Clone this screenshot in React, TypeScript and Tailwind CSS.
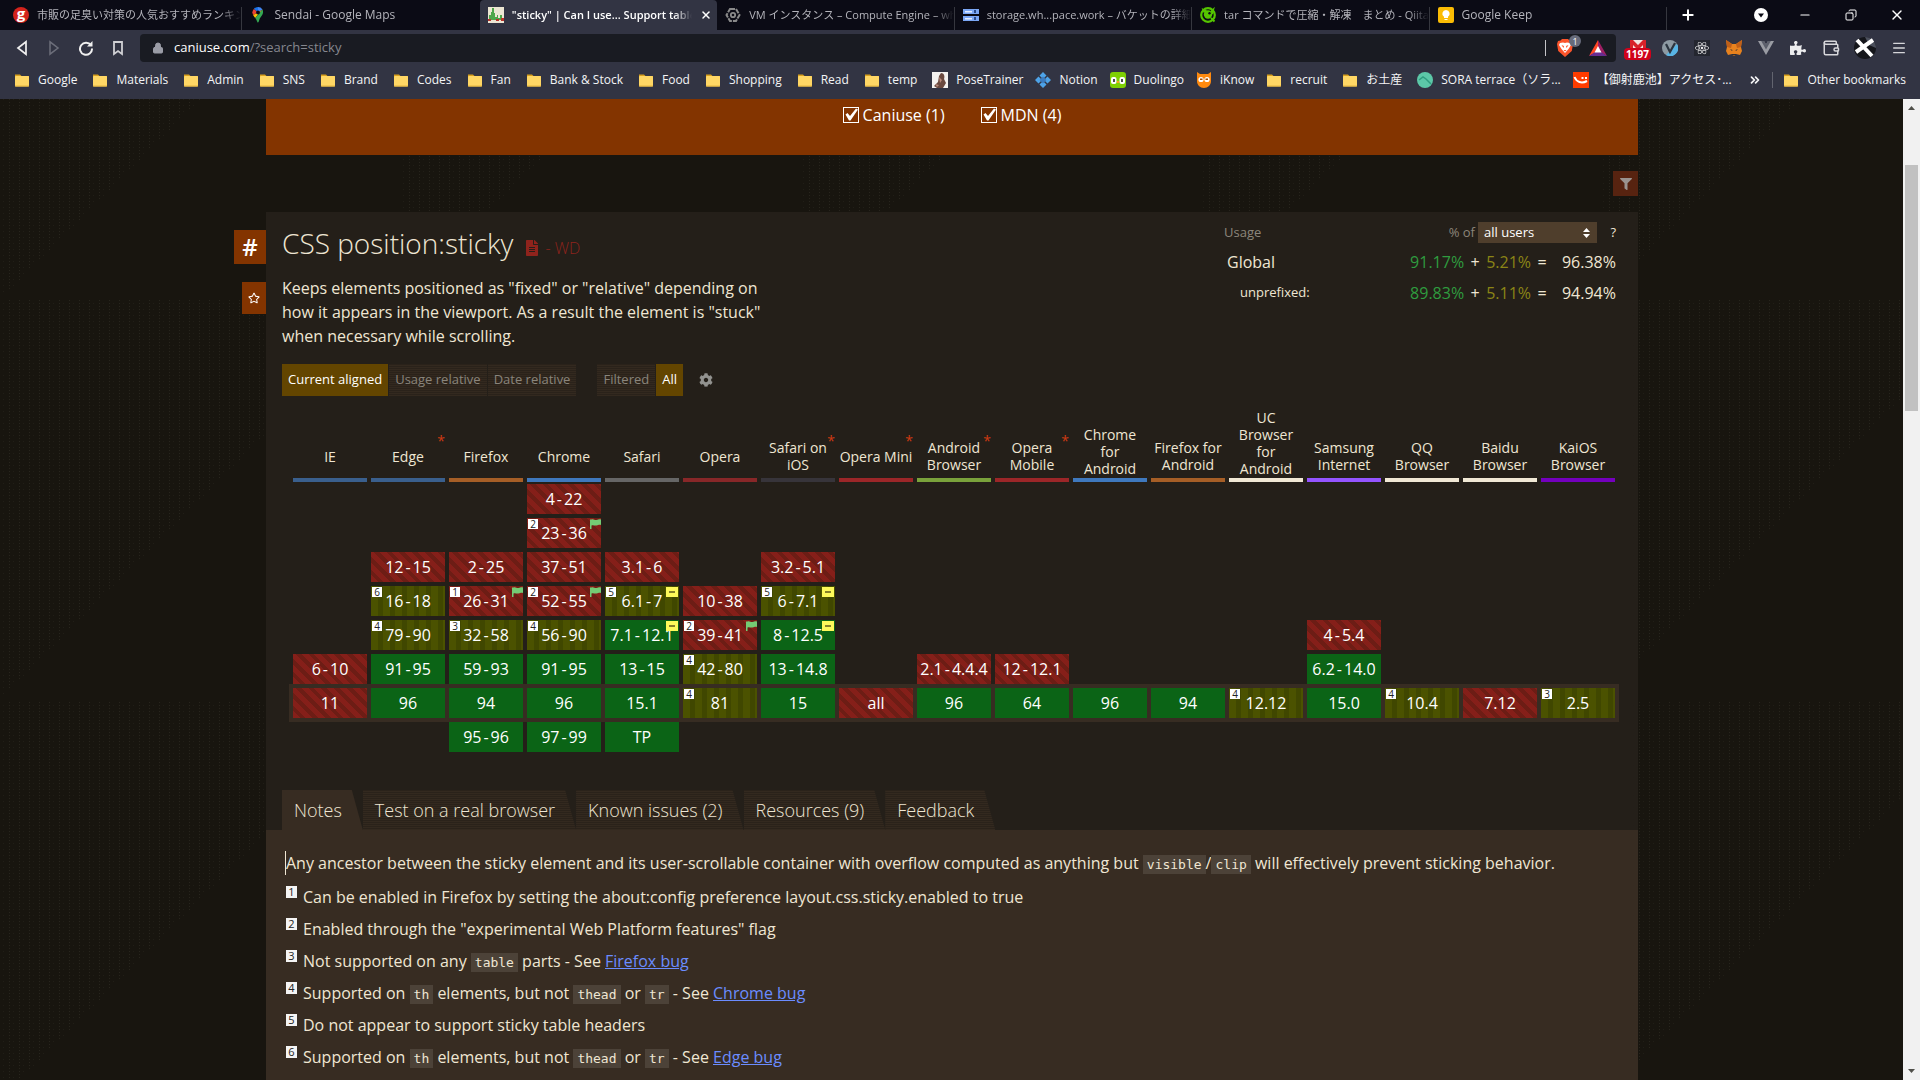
import type { ReactNode } from "react";
import clsx from "clsx";
import { Lock, Menu, Minus, Plus, X, Copy, ChevronsRight, Wallet } from "lucide-react";
import { FaCog, FaFileAlt, FaFilter, FaPuzzlePiece, FaReact, FaRegStar } from "react-icons/fa";

type Support = "y" | "n" | "a";
type Mark = "flag" | "prefix";

interface Version {
  from: string;
  to?: string;
  support: Support;
  note?: string;
  mark?: Mark;
}

interface Browser {
  name: string;
  bar: string;
  star?: boolean;
  // one entry per table row, oldest first; row 6 is the current version
  versions: Record<number, Version>;
}

const y = (from: string, to?: string, note?: string, mark?: Mark): Version => ({ from, to, note, mark, support: "y" });
const n = (from: string, to?: string, note?: string, mark?: Mark): Version => ({ from, to, note, mark, support: "n" });
const a = (from: string, to?: string, note?: string, mark?: Mark): Version => ({ from, to, note, mark, support: "a" });

const CURRENT_ROW = 6;
const ROWS = [0, 1, 2, 3, 4, 5, 6, 7];

const BROWSERS: Browser[] = [
  { name: "IE", bar: "border-[#3a5f8d]", versions: { 5: n("6", "10"), 6: n("11") } },
  {
    name: "Edge",
    bar: "border-[#3a5f8d]",
    star: true,
    versions: { 2: n("12", "15"), 3: a("16", "18", "6"), 4: a("79", "90", "4"), 5: y("91", "95"), 6: y("96") },
  },
  {
    name: "Firefox",
    bar: "border-[#a65e26]",
    versions: {
      2: n("2", "25"),
      3: n("26", "31", "1", "flag"),
      4: a("32", "58", "3"),
      5: y("59", "93"),
      6: y("94"),
      7: y("95", "96"),
    },
  },
  {
    name: "Chrome",
    bar: "border-[#3f78bd]",
    versions: {
      0: n("4", "22"),
      1: n("23", "36", "2", "flag"),
      2: n("37", "51"),
      3: n("52", "55", "2", "flag"),
      4: a("56", "90", "4"),
      5: y("91", "95"),
      6: y("96"),
      7: y("97", "99"),
    },
  },
  {
    name: "Safari",
    bar: "border-[#666666]",
    versions: {
      2: n("3.1", "6"),
      3: a("6.1", "7", "5", "prefix"),
      4: y("7.1", "12.1", undefined, "prefix"),
      5: y("13", "15"),
      6: y("15.1"),
      7: y("TP"),
    },
  },
  {
    name: "Opera",
    bar: "border-[#882728]",
    versions: { 3: n("10", "38"), 4: n("39", "41", "2", "flag"), 5: a("42", "80", "4"), 6: a("81", undefined, "4") },
  },
  {
    name: "Safari on\niOS",
    bar: "border-[#37343a]",
    star: true,
    versions: {
      2: n("3.2", "5.1"),
      3: a("6", "7.1", "5", "prefix"),
      4: y("8", "12.5", undefined, "prefix"),
      5: y("13", "14.8"),
      6: y("15"),
    },
  },
  { name: "Opera Mini", bar: "border-[#9c2628]", star: true, versions: { 6: n("all") } },
  { name: "Android\nBrowser", bar: "border-[#7aa23b]", star: true, versions: { 5: n("2.1", "4.4.4"), 6: y("96") } },
  { name: "Opera\nMobile", bar: "border-[#9c2628]", star: true, versions: { 5: n("12", "12.1"), 6: y("64") } },
  { name: "Chrome\nfor\nAndroid", bar: "border-[#3f78bd]", versions: { 6: y("96") } },
  { name: "Firefox for\nAndroid", bar: "border-[#a65e26]", versions: { 6: y("94") } },
  { name: "UC\nBrowser\nfor\nAndroid", bar: "border-[#f1e8d5]", versions: { 6: a("12.12", undefined, "4") } },
  {
    name: "Samsung\nInternet",
    bar: "border-[#9454ff]",
    versions: { 4: n("4", "5.4"), 5: y("6.2", "14.0"), 6: y("15.0") },
  },
  { name: "QQ\nBrowser", bar: "border-[#f1e8d5]", versions: { 6: a("10.4", undefined, "4") } },
  { name: "Baidu\nBrowser", bar: "border-[#f1e8d5]", versions: { 6: n("7.12") } },
  { name: "KaiOS\nBrowser", bar: "border-[#7400bd]", versions: { 6: a("2.5", undefined, "3") } },
];

const SUPPORT_BG: Record<Support, string> = {
  y: "bg-[#0b6416]",
  n: "bg-[#851f19] bg-[repeating-linear-gradient(45deg,#851f19_0_5px,#6d1d15_5px_9px)]",
  a: "bg-[#4b5200] bg-[repeating-linear-gradient(90deg,#4b5200_0_7px,#404700_7px_12px)]",
};

function FolderIcon() {
  return (
    <svg viewBox="0 0 16 16" className="size-4 shrink-0">
      <path d="M1 2.5h5l1.5 1.5H15v3H1z" fill="#d9a01d" />
      <rect x="1" y="4" width="14" height="10.5" rx="0.8" fill="#ffd765" />
      <path d="M1 13.5h14v.5a.6.6 0 0 1-.6.6H1.600a.6.6 0 0 1-.6-.6z" fill="#e9b73e" />
    </svg>
  );
}

function MapPin() {
  return (
    <svg viewBox="0 0 16 16" className="size-4 shrink-0">
      <path d="M8 0a5.500 5.500 0 0 0-4.200 1.900L8 5.500z" fill="#1a73e8" />
      <path d="M3.800 1.900A5.500 5.500 0 0 0 3.100 8L8 5.500z" fill="#ea4335" />
      <path d="M8 0a5.500 5.500 0 0 1 4.500 2.400L8 5.500z" fill="#4285f4" />
      <path d="M3.100 8c.5 1 1.300 1.900 2.100 3L12.500 2.400 8 5.500z" fill="#fbbc04" />
      <path d="M12.500 2.400C14.500 6.500 11 9 9.800 11.500 9 13 9 15.500 8 15.500s-1-2.500-2.800-4.500z" fill="#34a853" />
      <circle cx="8" cy="5.500" r="1.900" fill="#0b0b15" />
    </svg>
  );
}

function CaniuseIcon() {
  return (
    <svg viewBox="0 0 16 16" className="size-4 shrink-0">
      <rect width="16" height="16" fill="#ece6d3" />
      <path d="M1 13V8h2V5h1V1h2v5h1v4h2V8h1v3h2V8h2v5z" fill="#4fa64a" />
      <path d="M0 12h3v2H0zM8 12h3v2H8zM13 11h3v3h-3z" fill="#b8322a" />
    </svg>
  );
}

function ComputeIcon() {
  return (
    <svg viewBox="0 0 16 16" className="size-4 shrink-0" fill="none" stroke="#8a8a8a">
      <path d="M5 2h6l3.500 6L11 14H5L1.500 8z" strokeWidth="2" strokeDasharray="5 1" />
      <circle cx="8" cy="8" r="2.200" strokeWidth="1.800" />
    </svg>
  );
}

function StorageIcon() {
  return (
    <svg viewBox="0 0 16 16" className="size-4 shrink-0">
      <path d="M0 2h16v5H0zM0 9h16v5H0z" fill="#7ba7f5" />
      <path d="M2 4h7v1.500H2zM2 11h7v1.500H2z" fill="#e4edff" />
      <path d="M11 3h2v3h-2zM11 10h2v3h-2z" fill="#2b4c8c" />
    </svg>
  );
}

function QiitaIcon() {
  return (
    <svg viewBox="0 0 16 16" className="size-4 shrink-0">
      <circle cx="8" cy="8" r="6.800" fill="none" stroke="#55c500" strokeWidth="2.200" />
      <circle cx="8" cy="7.500" r="4.200" fill="#55c500" />
      <path d="M4.500 5.500 3.500 3l3 1.500M11 5l2-2-1 4M11 11l3.500 3.500" stroke="#55c500" strokeWidth="2" fill="none" />
      <circle cx="9.500" cy="6.300" r="1.200" fill="#0b0b15" />
    </svg>
  );
}

function KeepIcon() {
  return (
    <svg viewBox="0 0 16 16" className="size-4 shrink-0">
      <rect width="16" height="16" rx="2" fill="#fbbc04" />
      <path d="M8 3a3.700 3.700 0 0 0-2 6.800V11h4V9.800A3.700 3.700 0 0 0 8 3zM6.500 12h3v1h-3z" fill="#fff" />
    </svg>
  );
}

function RedG() {
  return (
    <span className="flex size-4 shrink-0 items-center justify-center rounded-full bg-[#d3231c] pb-[3px] text-[15px] leading-none font-bold text-white">
      g
    </span>
  );
}

const TABS: { title: string; icon: ReactNode; active?: boolean; small?: boolean }[] = [
  { title: "市販の足臭い対策の人気おすすめランキング", icon: <RedG />, small: true },
  { title: "Sendai - Google Maps", icon: <MapPin /> },
  { title: '"sticky" | Can I use... Support tables', icon: <CaniuseIcon />, active: true, small: true },
  { title: "VM インスタンス – Compute Engine – whi", icon: <ComputeIcon />, small: true },
  { title: "storage.wh...pace.work – バケットの詳細", icon: <StorageIcon />, small: true },
  { title: "tar コマンドで圧縮・解凍　まとめ - Qiita", icon: <QiitaIcon />, small: true },
  { title: "Google Keep", icon: <KeepIcon /> },
];

const BOOKMARKS: { label: string; icon?: ReactNode }[] = [
  { label: "Google" },
  { label: "Materials" },
  { label: "Admin" },
  { label: "SNS" },
  { label: "Brand" },
  { label: "Codes" },
  { label: "Fan" },
  { label: "Bank & Stock" },
  { label: "Food" },
  { label: "Shopping" },
  { label: "Read" },
  { label: "temp" },
  {
    label: "PoseTrainer",
    icon: (
      <svg viewBox="0 0 16 16" className="size-4 shrink-0">
        <rect width="16" height="16" fill="#f4f2f0" />
        <path d="M9 1c3 0 4 3 3 6l2 4-3 5H5l-3-2 4-4 1-6z" fill="#6b4a40" />
        <path d="M7 5l3 3-2 3zM3 12l4 1-2 2z" fill="#b98a7c" />
      </svg>
    ),
  },
  {
    label: "Notion",
    icon: (
      <svg viewBox="0 0 16 16" className="size-4 shrink-0">
        <path d="M8 0l3.500 3.500L8 7 4.500 3.500zM8 9l3.500 3.500L8 16l-3.500-3.500zM3.500 4.500L7 8l-3.500 3.500L0 8zM12.500 4.500L16 8l-3.500 3.500L9 8z" fill="#4ea3e8" />
        <path d="M8 4.500L11.500 8 8 11.500 4.500 8z" fill="#3b7cc0" />
      </svg>
    ),
  },
  {
    label: "Duolingo",
    icon: (
      <svg viewBox="0 0 16 16" className="size-4 shrink-0">
        <rect width="16" height="16" rx="3" fill="#7ed003" />
        <rect x="1" y="5" width="5.500" height="7" rx="2" fill="#fff" />
        <rect x="9.500" y="5" width="5.500" height="7" rx="2" fill="#fff" />
        <path d="M3 7h2v3H3zM11 7h2v3h-2z" fill="#4b4b4b" />
        <path d="M7 9h2v2H7z" fill="#f9a11b" />
      </svg>
    ),
  },
  {
    label: "iKnow",
    icon: (
      <svg viewBox="0 0 16 16" className="size-4 shrink-0">
        <path d="M1 0l3 2h8l3-2v9c0 4-3 7-7 7s-7-3-7-7z" fill="#ff8a0f" />
        <circle cx="5" cy="7.500" r="2.600" fill="#fff" />
        <circle cx="11" cy="7.500" r="2.600" fill="#fff" />
        <path d="M4 6.500h2.500v1.500H4zM9.500 6.500H12v1.500H9.500z" fill="#a34b00" />
      </svg>
    ),
  },
  { label: "recruit" },
  { label: "お土産" },
  {
    label: "SORA terrace（ソラ...",
    icon: (
      <svg viewBox="0 0 16 16" className="size-4 shrink-0">
        <circle cx="8" cy="8" r="8" fill="#5cc8a8" />
        <path d="M2 8l4-3 3 2 5 5" stroke="#2f9c7f" strokeWidth="1.500" fill="none" />
      </svg>
    ),
  },
  {
    label: "【御射鹿池】アクセス･...",
    icon: (
      <svg viewBox="0 0 16 16" className="size-4 shrink-0">
        <rect width="16" height="16" fill="#ff3c00" />
        <path d="M1.500 5c2 5 7 7 12.500 4" stroke="#fff" strokeWidth="2" fill="none" />
        <path d="M8.500 5h2v2h-2zM12 5h2v2h-2z" fill="#fff" />
      </svg>
    ),
  },
];

function TabStrip() {
  return (
    <div className="flex h-[30px] bg-[#0b0b15] pl-[5px] text-[#b4b4bb]">
      <div className="flex min-w-0 flex-1">
        {TABS.map((tab, i) => (
          <div
            key={tab.title}
            className={clsx(
              "flex min-w-0 flex-1 items-center gap-2 pl-2",
              tab.active ? "rounded-t bg-[#323443] font-semibold text-white" : "text-[#b4b4bb]",
              tab.small ? "text-[11px]" : "text-[12px]"
            )}
          >
            {tab.icon}
            <span className="min-w-0 flex-1 overflow-hidden whitespace-nowrap [mask-image:linear-gradient(90deg,#000_90%,transparent)]">
              {tab.title}
            </span>
            {tab.active && (
              <button aria-label="Close tab" className="mr-1 shrink-0 text-white">
                <X className="size-3" strokeWidth={3} />
              </button>
            )}
            <span
              className={clsx(
                "mt-[7px] -ml-2 w-px shrink-0 self-stretch",
                !tab.active && i !== 1 ? "bg-[#36373f]" : "bg-transparent"
              )}
            />
          </div>
        ))}
      </div>
      <div className="flex w-[253px] shrink-0 items-center text-white">
        <button aria-label="New tab" className="flex w-[42px] justify-center">
          <Plus className="size-4" strokeWidth={3} />
        </button>
        <button aria-label="Search tabs" className="ml-[45px] flex w-[14px] justify-center">
          <svg viewBox="0 0 14 14" className="size-3.5">
            <circle cx="7" cy="7" r="7" fill="#fff" />
            <path d="M4 5.500h6L7 9.500z" fill="#0b0b15" />
          </svg>
        </button>
        <button aria-label="Minimize" className="ml-3.5 flex w-[46px] justify-center">
          <Minus className="size-3.5" strokeWidth={2} />
        </button>
        <button aria-label="Restore" className="flex w-[46px] justify-center">
          <Copy className="size-3 -scale-x-100" strokeWidth={2} />
        </button>
        <button aria-label="Close" className="flex w-[46px] justify-center">
          <X className="size-4" strokeWidth={2} />
        </button>
      </div>
    </div>
  );
}

function NavButton({ label, children }: { label: string; children: ReactNode }) {
  return (
    <button aria-label={label} className="flex w-8 shrink-0 items-center justify-center">
      {children}
    </button>
  );
}

function Toolbar() {
  return (
    <div className="flex h-9 items-center bg-[#323443] pl-[6px] text-[#e4e4e6]">
      <NavButton label="Back">
        <svg viewBox="0 0 16 16" className="size-4" fill="none" stroke="#f0f0f0" strokeWidth="1.700">
          <path d="M12 1.800v12.400L4 8z" />
        </svg>
      </NavButton>
      <NavButton label="Forward">
        <svg viewBox="0 0 16 16" className="size-4" fill="none" stroke="#6c6e7a" strokeWidth="1.500">
          <path d="M4 1.800v12.400L12 8z" />
        </svg>
      </NavButton>
      <NavButton label="Reload">
        <svg viewBox="0 0 16 16" className="size-4" fill="none" stroke="#f0f0f0" strokeWidth="2">
          <path d="M13 5.500A6 6 0 1 0 14 8.500" />
          <path d="M14.500 1v5.500H9z" fill="#f0f0f0" stroke="none" />
        </svg>
      </NavButton>
      <NavButton label="Bookmark this page">
        <svg viewBox="0 0 16 16" className="size-4" fill="none" stroke="#d0d0d4" strokeWidth="1.800">
          <path d="M4 2h8v12l-4-3-4 3z" />
        </svg>
      </NavButton>
      <div className="ml-[6px] flex h-7 min-w-0 flex-1 items-center rounded bg-[#191b22] pr-[9px] pl-3">
        <Lock className="size-3 shrink-0 text-[#9a9ca6]" fill="#9a9ca6" strokeWidth={2} />
        <a href="#top" className="ml-[10px] flex-1 text-[13px] text-[#85878f]">
          <span className="text-white">caniuse.com</span>/?search=sticky
        </a>
        <span className="h-4 w-px bg-[#c4c4c8]" />
        <button aria-label="Brave Shields" className="relative ml-[11px]">
          <svg viewBox="0 0 16 18" className="h-[18px] w-4">
            <path d="M5 0h6l1.500 1.500L15 2l1 3-1.200 7L8 18l-6.800-6L0 5l1-3 2.500-.5z" fill="#fb542b" />
            <path d="M3 4l3-.5L8 4l2-.5 3 .5 1 2-2.500 4L8 14l-3.500-4L2 6z" fill="#fff" />
            <path d="M4.500 6l2.500 1-.5 2zM11.500 6L9 7l.5 2zM6.500 11h3L8 12.500z" fill="#fb542b" />
          </svg>
          <span className="absolute -top-1 left-3 flex size-3 items-center justify-center rounded-full bg-[#676b7b] text-[9px] leading-none text-white">
            1
          </span>
        </button>
        <button aria-label="Brave Rewards" className="ml-4">
          <svg viewBox="0 0 18 16" className="h-4 w-[18px]">
            <path d="M9 0L0 16l9-5z" fill="#ff4724" />
            <path d="M9 0l9 16-9-5z" fill="#9e1f63" />
            <path d="M0 16h18L9 10z" fill="#662d91" />
            <path d="M9 6l3.500 6.500h-7z" fill="#fff" />
          </svg>
        </button>
      </div>
      <div className="flex shrink-0 items-center pr-1 pl-[6px]">
        <NavButton label="Gmail checker">
          <span className="relative">
            <svg viewBox="0 0 16 14" className="mb-0.5 h-3.5 w-4">
              <rect width="16" height="14" fill="#f1e4e2" />
              <path d="M0 0h3l5 5 5-5h3v14h-3V5L8 10 3 5v9H0z" fill="#d8222a" />
            </svg>
            <span className="absolute top-2 -left-[6px] rounded-sm bg-[#d0021b] px-0.5 text-[10px] leading-3 font-bold text-white">
              1197
            </span>
          </span>
        </NavButton>
        <NavButton label="Vimium">
          <svg viewBox="0 0 16 16" className="size-4">
            <circle cx="8" cy="8" r="8" fill="#8d9aa3" />
            <path d="M15 4a8 8 0 0 1-11 11z" fill="#58b4e5" />
            <path d="M4 4l4 8 5-9" stroke="#2b3540" strokeWidth="2.200" fill="none" />
          </svg>
        </NavButton>
        <NavButton label="React Developer Tools">
          <span className="flex size-4 items-center justify-center bg-[#24262f]">
            <FaReact className="size-3.5 text-[#e8e8e8]" />
          </span>
        </NavButton>
        <NavButton label="MetaMask">
          <svg viewBox="0 0 16 16" className="size-4">
            <path d="M0 0l6 4h4l6-4-1 7 1 4-2 4-4-1-1 2H7l-1-2-4 1-2-4 1-4z" fill="#e8821e" />
            <path d="M0 0l6 4-1 4-4-1zM16 0l-6 4 1 4 4-1z" fill="#c05f18" />
            <path d="M4 9l2.500 1L6 11zM12 9l-2.500 1 .5 1zM6 14h4v1.500H6z" fill="#2a2f38" />
          </svg>
        </NavButton>
        <NavButton label="Vue.js devtools">
          <svg viewBox="0 0 16 14" className="h-3.5 w-4">
            <path d="M0 0h6l2 3.500L10 0h6L8 14z" fill="#9a9ca3" />
            <path d="M3.200 0H6l2 3.500L10 0h2.800L8 8.500z" fill="#5c5f6b" />
          </svg>
        </NavButton>
        <NavButton label="Extensions">
          <FaPuzzlePiece className="size-4 text-[#ececee]" />
        </NavButton>
        <button aria-label="Wallet" className="flex w-[34px] items-center justify-center">
          <Wallet className="size-[18px] text-[#d6d6da]" strokeWidth={2} />
        </button>
        <button aria-label="Profile" className="flex w-[34px] items-center justify-center">
          <svg viewBox="0 0 22 22" className="size-[22px]">
            <circle cx="11" cy="11" r="11" fill="#15161b" />
            <path d="M11 0a11 11 0 0 1 11 11L15 8z" fill="#4b4f5c" />
            <path d="M3 3l15 16M19 3L2 15" stroke="#fff" strokeWidth="4" />
          </svg>
        </button>
        <button aria-label="Menu" className="flex w-[34px] items-center justify-center">
          <Menu className="size-4 text-[#d6d6da]" strokeWidth={2} />
        </button>
      </div>
    </div>
  );
}

function BookmarksBar() {
  return (
    <nav className="flex h-[33px] items-center bg-[#323443] pr-[14px] pb-[5px] pl-[14px] text-[12px] whitespace-nowrap text-[#f4f4f6]">
      <div className="flex min-w-0 flex-1 items-center overflow-hidden">
        {BOOKMARKS.map((b) => (
          <a
            key={b.label}
            href="#top"
            className={clsx("flex shrink-0 items-center gap-2", b.icon ? "mr-3" : "mr-[15px]")}
          >
            {b.icon ?? <FolderIcon />}
            {b.label}
          </a>
        ))}
      </div>
      <button aria-label="More bookmarks" className="mr-[10px]">
        <ChevronsRight className="size-3.5" strokeWidth={3} />
      </button>
      <span className="h-4 w-px bg-[#62646f]" />
      <a href="#top" className="ml-[10px] flex items-center gap-2">
        <FolderIcon />
        Other bookmarks
      </a>
    </nav>
  );
}

function SourceCheckbox({ label }: { label: string }) {
  return (
    <label className="flex items-center gap-1">
      <span className="relative size-4">
        <input
          type="checkbox"
          defaultChecked
          className="block size-4 appearance-none border border-white bg-transparent"
        />
        <svg viewBox="0 0 16 16" className="pointer-events-none absolute inset-0 size-4">
          <path d="M2.500 7.500l2-1.500L7 9 13 1.500l2 1L7.500 13.500H6z" fill="#fff" />
        </svg>
      </span>
      {label}
    </label>
  );
}

function VersionCell({ version }: { version: Version }) {
  return (
    <div className={clsx("relative h-[30px] text-[16px] leading-[30px] text-white", SUPPORT_BG[version.support])}>
      {version.from}
      {version.to && (
        <>
          <span className="mx-0.5">-</span>
          {version.to}
        </>
      )}
      {version.note && (
        <span className="absolute top-px left-px h-2.5 w-2.5 bg-white text-[10px] leading-2.5 text-[#222]">
          {version.note}
        </span>
      )}
      {version.mark === "flag" && (
        <svg viewBox="0 0 11 10" className="absolute top-px right-0 h-2.5 w-[11px]">
          <path d="M0 .500h1.500c2-1 3 1 5 .5S9 0 11 .500v5.500c-2-.5-2.500 0-4.500.5s-3-.8-5 0V10H0z" fill="#74cc74" />
        </svg>
      )}
      {version.mark === "prefix" && (
        <span className="absolute top-px right-px flex h-2.5 w-3 items-center justify-center bg-[#fdf95a]">
          <span className="h-0.5 w-1.5 bg-[#85802a]" />
        </span>
      )}
    </div>
  );
}

function SupportTable() {
  return (
    <div className="mt-[13px] mr-[5px] ml-[9px]">
      <table className="w-full table-fixed border-separate border-spacing-0 text-center">
        <thead>
          <tr>
            {BROWSERS.map((b) => (
              <th key={b.name} className="px-0.5 py-0 align-bottom text-[14px] leading-[17px] font-normal">
                <div className={clsx("border-b-4 pb-px", b.bar)}>
                  <div className="relative flex min-h-[42px] items-center justify-center whitespace-pre">
                    {b.name}
                    {b.star && <span className="absolute top-0 right-0 leading-3 text-[#cf3a12]">*</span>}
                  </div>
                </div>
              </th>
            ))}
          </tr>
        </thead>
        <tbody>
          {ROWS.map((row) => (
            <tr key={row} className={row === CURRENT_ROW ? "bg-[#372c22] shadow-[0_0_0_2px_#372c22]" : undefined}>
              {BROWSERS.map((b) => (
                <td key={b.name} className="h-[34px] p-0.5">
                  {b.versions[row] && <VersionCell version={b.versions[row]} />}
                </td>
              ))}
            </tr>
          ))}
        </tbody>
      </table>
    </div>
  );
}

const USAGE = [
  { label: "Global", full: "91.17%", partial: "5.21%", total: "96.38%" },
  { label: "unprefixed:", full: "89.83%", partial: "5.11%", total: "94.94%" },
];

function UsageStats() {
  return (
    <div className="w-[392px] shrink-0 pt-[10px]">
      <div className="flex h-[21px] items-center text-[13px] text-[#8c867b]">
        <span>Usage</span>
        <label htmlFor="usage-scope" className="mr-[3px] ml-auto">
          % of
        </label>
        <span className="relative">
          <select
            id="usage-scope"
            defaultValue="all"
            className="block h-[21px] w-[119px] appearance-none bg-[#4f3e2c] px-[6px] text-[13px] text-white"
          >
            <option value="all">all users</option>
          </select>
          <svg viewBox="0 0 7 10" className="pointer-events-none absolute top-[6px] right-[7px] h-2.5 w-[7px]">
            <path d="M3.500 0L7 4H0zM3.500 10L0 6h7z" fill="#fff" />
          </svg>
        </span>
        <button className="w-[19px] text-right text-[#efe6d3]">?</button>
      </div>
      <table className="mt-[3px] w-full border-separate border-spacing-0 text-[16px]">
        <tbody>
          {USAGE.map((u, i) => (
            <tr key={u.label} className="h-[31px]">
              <th className={clsx("p-0 text-left font-normal", i === 0 ? "pl-[3px]" : "pl-4 text-[13px]")}>{u.label}</th>
              <td className="w-[54px] p-0 text-right text-[#2f9c3f]">{u.full}</td>
              <td className="w-[22px] p-0 text-center">+</td>
              <td className="w-[44px] p-0 text-right text-[#8b8516]">{u.partial}</td>
              <td className="w-[22px] p-0 text-center">=</td>
              <td className="w-[63px] p-0 text-right">{u.total}</td>
            </tr>
          ))}
        </tbody>
      </table>
    </div>
  );
}

function ViewButton({ active, children }: { active?: boolean; children: ReactNode }) {
  return (
    <button
      className={clsx(
        "h-8 px-1.5 text-[13px]",
        active
          ? "bg-[#634500] text-white"
          : "bg-[repeating-linear-gradient(0deg,#33291f_0_1px,#2a221a_1px_2px)] text-[#8a857c]"
      )}
    >
      {children}
    </button>
  );
}

function Code({ children }: { children: ReactNode }) {
  return (
    <code className="bg-[#4c4238] px-1 py-0.5 font-['DejaVu_Sans_Mono','Liberation_Mono',monospace] text-[13px] leading-4">
      {children}
    </code>
  );
}

function BugLink({ children }: { children: ReactNode }) {
  return (
    <a href="#bug" className="text-[#6b8cff] underline">
      {children}
    </a>
  );
}

const thTheadTr = (bug: string) => (
  <>
    Supported on <Code>th</Code> elements, but not <Code>thead</Code> or <Code>tr</Code> - See <BugLink>{bug}</BugLink>
  </>
);

const NOTES: ReactNode[] = [
  "Can be enabled in Firefox by setting the about:config preference layout.css.sticky.enabled to true",
  'Enabled through the "experimental Web Platform features" flag',
  <>
    Not supported on any <Code>table</Code> parts - See <BugLink>Firefox bug</BugLink>
  </>,
  thTheadTr("Chrome bug"),
  "Do not appear to support sticky table headers",
  thTheadTr("Edge bug"),
];

const PANEL_TABS = ["Notes", "Test on a real browser", "Known issues (2)", "Resources (9)", "Feedback"];

function FeaturePanel() {
  return (
    <article className="relative mt-[7px] flex flex-1 flex-col bg-[#241f19]">
      <div className="absolute top-[18px] right-full flex flex-col items-end gap-[18px] text-white">
        <a href="#feat" className="flex h-[34px] w-8 items-center justify-center bg-[#833400] text-[24px] font-semibold">
          #
        </a>
        <button aria-label="Star feature" className="flex h-8 w-6 items-center justify-center bg-[#833400]">
          <FaRegStar className="size-3" />
        </button>
      </div>

      <div className="px-4">
        <div className="flex justify-between pr-[6px]">
          <div className="pt-3">
            <div className="flex items-baseline">
              <h1 className="text-[28px] leading-[38px] font-light">CSS position:sticky</h1>
              <a href="#spec" className="ml-[11px] flex items-baseline gap-[5px] text-[16px] font-light text-[#8f231c]">
                <FaFileAlt className="size-4 self-center" />- WD
              </a>
            </div>
            <p className="mt-[14px] max-w-[490px] text-[16px] leading-6">
              Keeps elements positioned as "fixed" or "relative" depending on how it appears in the viewport. As a
              result the element is "stuck" when necessary while scrolling.
            </p>
          </div>
          <UsageStats />
        </div>

        <div className="mt-4 flex items-center">
          <div className="flex gap-px">
            <ViewButton active>Current aligned</ViewButton>
            <ViewButton>Usage relative</ViewButton>
            <ViewButton>Date relative</ViewButton>
          </div>
          <div className="ml-[21px] flex gap-px">
            <ViewButton>Filtered</ViewButton>
            <ViewButton active>All</ViewButton>
          </div>
          <button aria-label="Settings" className="ml-4 text-[#92928f]">
            <FaCog className="size-3.5" />
          </button>
        </div>

        <SupportTable />

        <div className="mt-9 flex">
          {PANEL_TABS.map((tab, i) => (
            <button
              key={tab}
              className={clsx(
                "h-10 pr-[21px] pl-3 text-[18px] font-light [clip-path:polygon(0_0,calc(100%-11px)_0,100%_100%,0_100%)]",
                i === 0 ? "bg-[#372c22]" : "bg-[repeating-linear-gradient(0deg,#33291f_0_1px,#2a221a_1px_2px)]"
              )}
            >
              {tab}
            </button>
          ))}
        </div>
      </div>

      <div className="flex-1 bg-[#372c22] px-5 pt-[21px] text-[16px] leading-6">
        <p className="-ml-px border-l border-[#efe6d3]">
          Any ancestor between the sticky element and its user-scrollable container with overflow computed as anything
          but <Code>visible</Code>/<Code>clip</Code> will effectively prevent sticking behavior.
        </p>
        <ol className="mt-[10px] flex flex-col gap-2">
          {NOTES.map((note, i) => (
            <li key={i} className="flex gap-[6px]">
              <sup className="top-0 mt-px h-3 w-[11px] shrink-0 bg-[#f4f4f4] text-center text-[11px] leading-3 text-[#222]">
                {i + 1}
              </sup>
              <span>{note}</span>
            </li>
          ))}
        </ol>
      </div>
    </article>
  );
}

function Scrollbar() {
  return (
    <div className="flex w-[17px] shrink-0 flex-col items-center bg-[#f1f1f1]">
      <svg viewBox="0 0 7 4" className="mt-[7px] h-1 w-[7px]">
        <path d="M3.500 0L7 4H0z" fill="#50504a" />
      </svg>
      <div className="mt-[55px] h-[246px] w-[13px] bg-[#c1c1c1]" />
      <svg viewBox="0 0 7 4" className="mt-auto mb-[7px] h-1 w-[7px]">
        <path d="M3.500 4L7 0H0z" fill="#50504a" />
      </svg>
    </div>
  );
}

export default function App() {
  return (
    <div className="flex h-screen flex-col overflow-hidden font-['Open_Sans','Noto_Sans_CJK_JP',sans-serif]">
      <header>
        <TabStrip />
        <Toolbar />
        <BookmarksBar />
      </header>

      <div className="flex min-h-0 flex-1">
        {/* faint dotted triangles, one per 400px tile */}
        <main className="flex min-w-0 flex-1 flex-col overflow-hidden bg-[#18150f] [background-image:linear-gradient(135deg,transparent_50%,#18150f_50%),conic-gradient(at_1px_1px,transparent_75%,#28251d_0),conic-gradient(at_1px_1px,transparent_75%,#211e17_0)] [background-position:0_201px,9px_0,3px_0] [background-size:400px_400px,10px_3px,10px_6px] pl-px text-[#efe6d3]">
          <div className="mx-auto flex w-full max-w-[1372px] flex-1 flex-col">
            <div className="flex h-14 items-start justify-center gap-9 bg-[#833400] pt-1 text-[16px] leading-6 text-white">
              <SourceCheckbox label="Caniuse (1)" />
              <SourceCheckbox label="MDN (4)" />
            </div>
            <div className="flex justify-end">
              <button
                aria-label="Filter"
                className="mt-4 mb-[9px] flex h-[25px] w-[25px] items-center justify-center bg-[#572310] text-[#9a938f]"
              >
                <FaFilter className="size-3" />
              </button>
            </div>
            <FeaturePanel />
          </div>
        </main>
        <Scrollbar />
      </div>
    </div>
  );
}
